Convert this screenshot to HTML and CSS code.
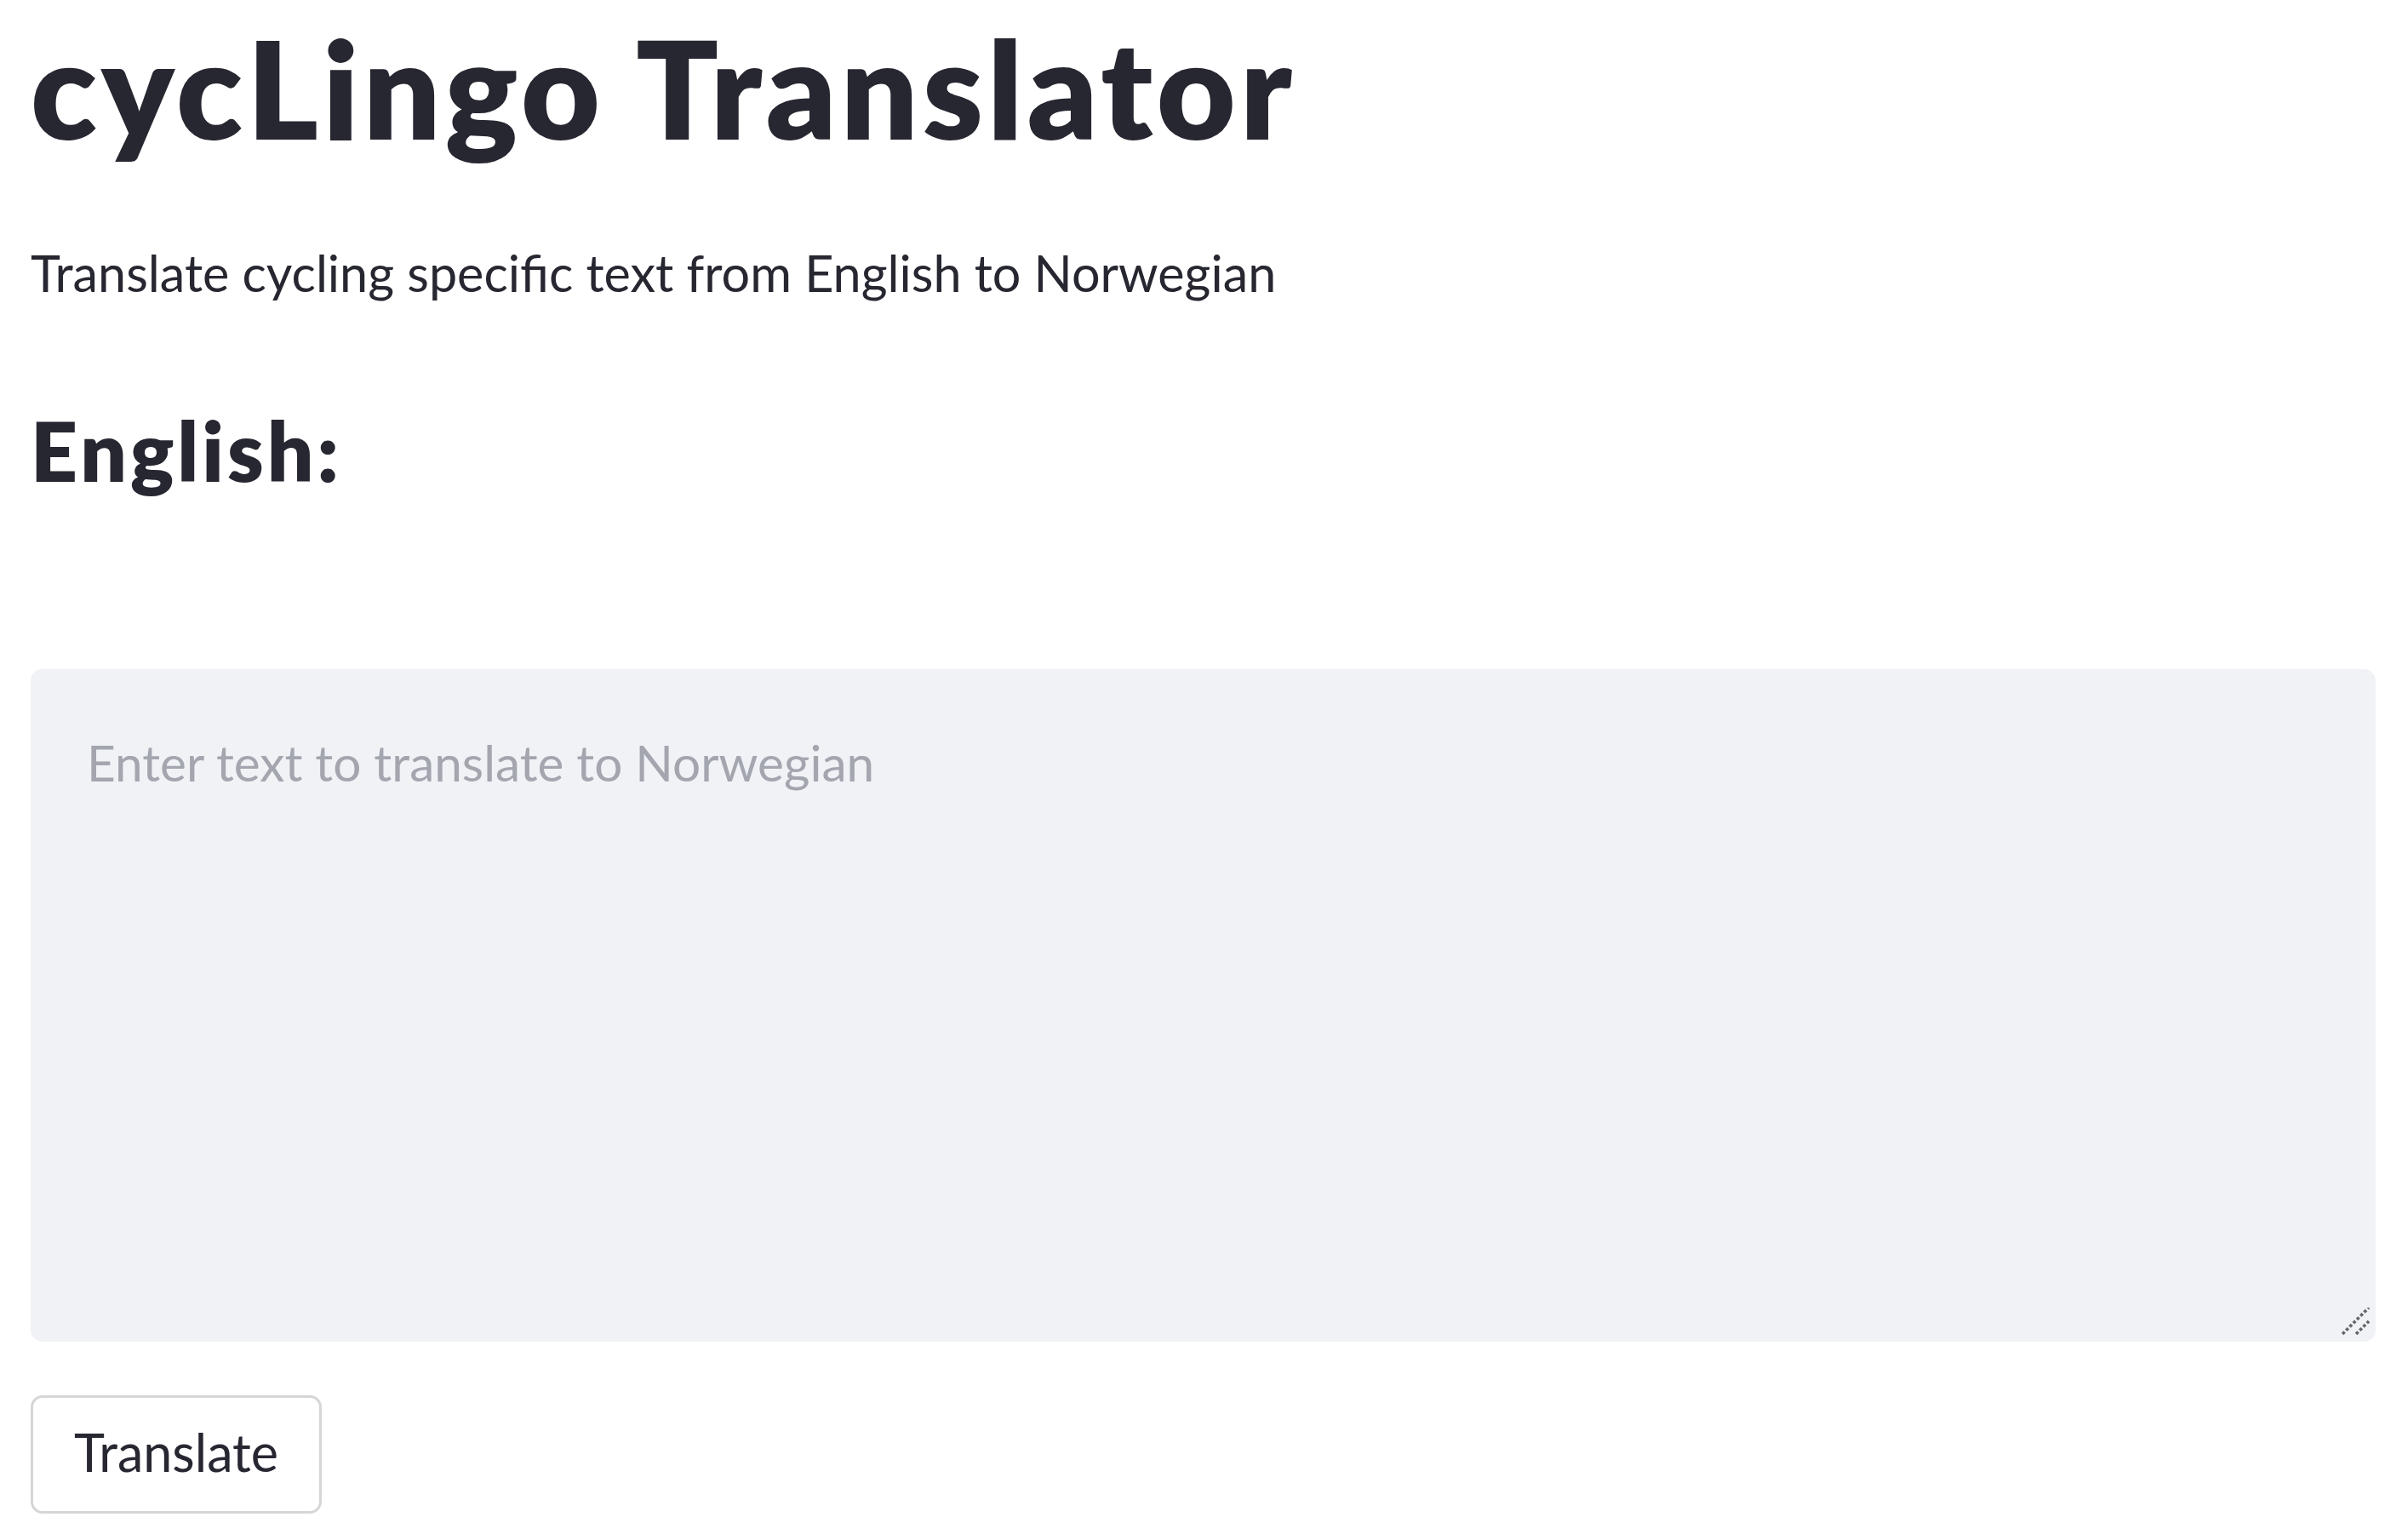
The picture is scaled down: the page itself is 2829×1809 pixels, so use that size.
FILE: index.html
```html
<!DOCTYPE html>
<html lang="en">
<head>
<meta charset="utf-8">
<title>cycLingo Translator</title>
<link rel="stylesheet" href="styles.css">
</head>
<body>
<main class="app">
  <h1 class="title">cycLingo Translator</h1>
  <p class="subtitle">Translate cycling specific text from English to Norwegian</p>
  <h2 class="section">English:</h2>
  <div class="field">
    <textarea class="input" placeholder="Enter text to translate to Norwegian"></textarea>
    <svg class="grip" width="40" height="40" viewBox="0 0 40 40" aria-hidden="true">
      <line x1="1" y1="31" x2="32" y2="0" />
      <line x1="17" y1="31" x2="32" y2="16" />
    </svg>
  </div>
  <button class="btn" type="button">Translate</button>
</main>
</body>
</html>
```

FILE: styles.css
```css
html, body {
  margin: 0;
  padding: 0;
  background: #ffffff;
}

.app {
  font-family: Lato, "Open Sans", sans-serif;
  color: #262730;
  padding: 2px 38px 0 36px;
  display: flex;
  flex-direction: column;
  align-items: flex-start;
}

.title {
  margin: 0;
  font-size: 160px;
  font-weight: 800;
  line-height: 200px;
  letter-spacing: 5px;
}

.subtitle {
  margin: 78px 0 0 0;
  font-size: 59.3px;
  font-weight: 400;
  line-height: 80px;
}

.section {
  margin: 109px 0 0 0;
  font-size: 96px;
  font-weight: 800;
  line-height: 120px;
  letter-spacing: 4px;
}

.field {
  position: relative;
  align-self: stretch;
  margin-top: 197px;
}

.input {
  display: block;
  box-sizing: border-box;
  width: 100%;
  height: 790px;
  margin: 0;
  padding: 69px 62px 0 66px;
  border: none;
  border-radius: 14px;
  background: #f0f2f6;
  font-family: Lato, "Open Sans", sans-serif;
  font-size: 58.5px;
  line-height: 80px;
  color: #262730;
  resize: none;
  outline: none;
}

.input::placeholder {
  color: #a3a6ae;
  opacity: 1;
}

.grip {
  position: absolute;
  right: 0;
  bottom: 0;
  width: 40px;
  height: 40px;
}

.grip line {
  stroke: #666666;
  stroke-width: 3.6;
  stroke-dasharray: 3.6 2.4;
}

.btn {
  margin-top: 63px;
  box-sizing: border-box;
  height: 139px;
  width: 342px;
  padding: 0 0 6px 0;
  border: 3px solid #d6d6d9;
  border-radius: 14px;
  background: #ffffff;
  color: #262730;
  font-family: Lato, "Open Sans", sans-serif;
  font-size: 61px;
  line-height: 72px;
  display: flex;
  align-items: center;
  justify-content: center;
}
```
